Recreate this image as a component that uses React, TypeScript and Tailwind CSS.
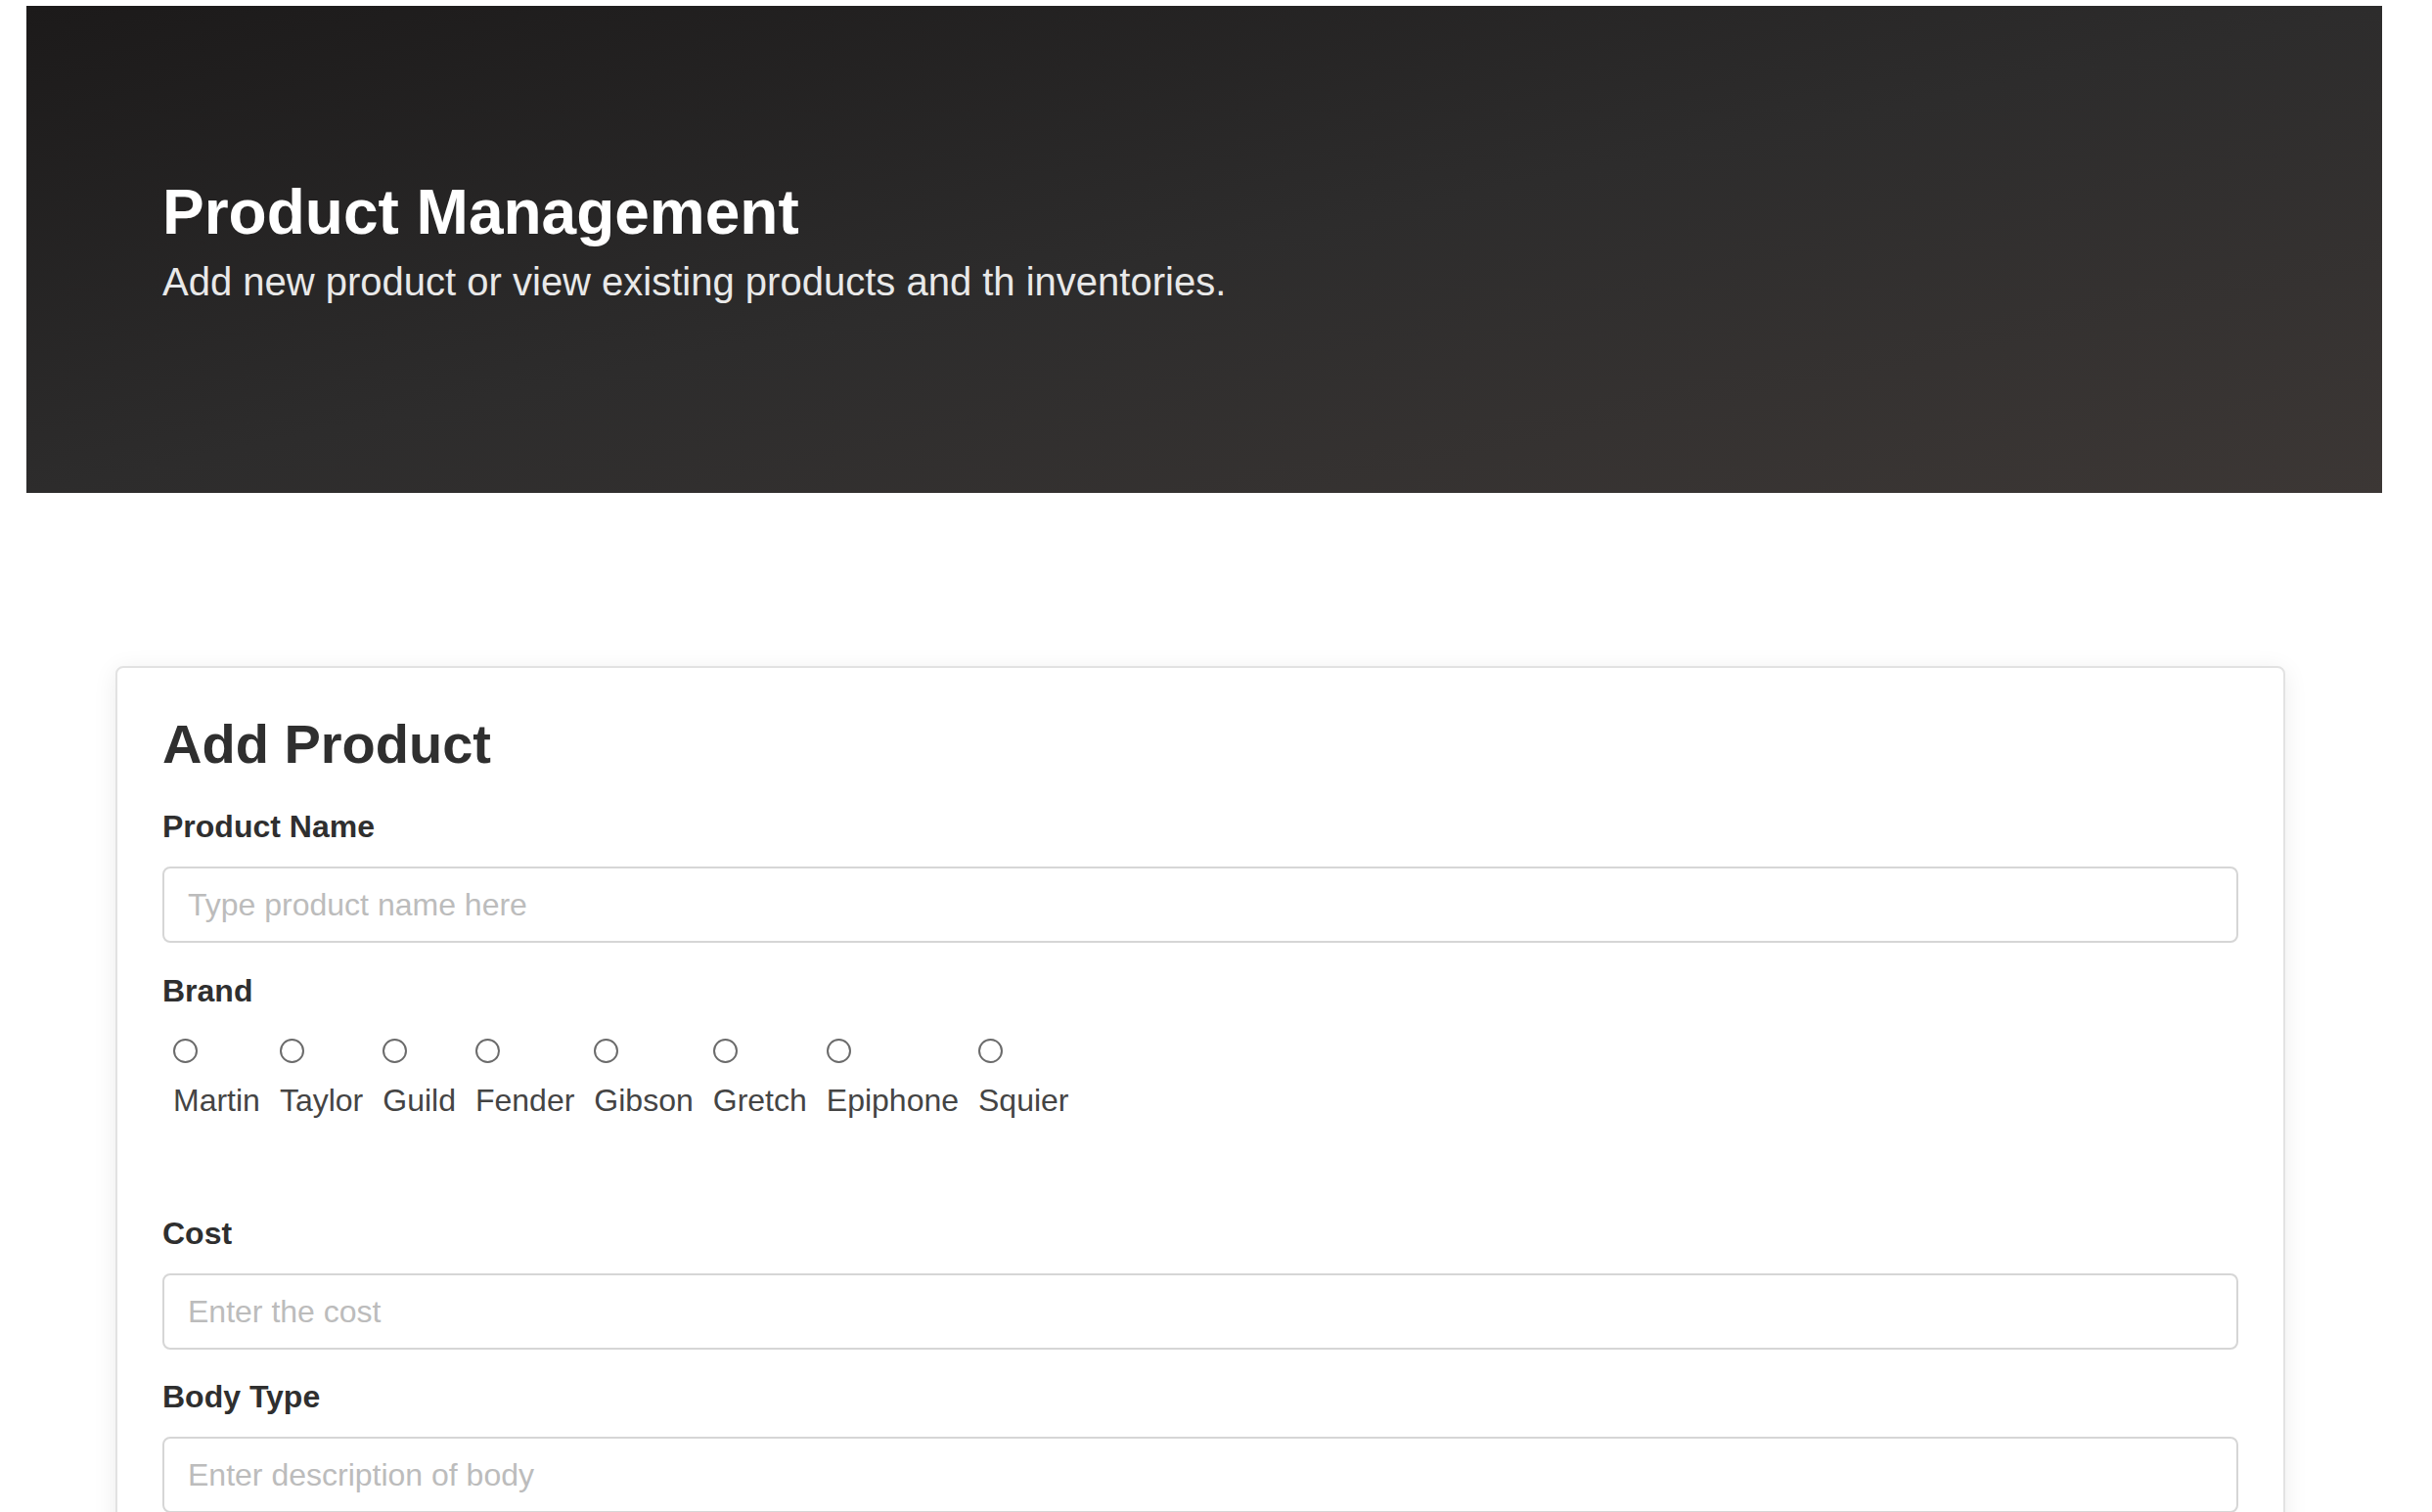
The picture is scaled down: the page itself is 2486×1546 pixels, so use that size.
import React from "react";

const brands = ["Martin", "Taylor", "Guild", "Fender", "Gibson", "Gretch", "Epiphone", "Squier"];

function Field({ label, placeholder, mt }: { label: string; placeholder: string; mt: string }) {
  return (
    <div className={mt}>
      <label className="block text-[32px] leading-[40px] font-bold text-[#2f2f2f]">{label}</label>
      <input
        type="text"
        placeholder={placeholder}
        className="mt-[21px] block w-full h-[78px] rounded-[8px] border-2 border-[#d6d6d6] bg-white pl-[24px] text-[32px] text-[#333] placeholder:text-[#bcbcbc] outline-none"
        style={{ fontFamily: '"Liberation Sans", Arial, sans-serif' }}
      />
    </div>
  );
}

export default function App() {
  return (
    <div
      className="min-h-screen bg-white pt-[6px] pl-[27px] pr-[51px] pb-[200px]"
      style={{ fontFamily: '"Liberation Sans", Arial, Helvetica, sans-serif' }}
    >
      <header className="h-[498px] bg-linear-to-br from-[#1c1a1a] via-[#2d2c2c] to-[#3c3735] pl-[139px] pt-[173px]">
        <h1 className="text-[64px] leading-[77px] font-bold text-white">Product Management</h1>
        <p className="mt-[8px] text-[40px] leading-[48px] text-[#e9e9e9]">
          Add new product or view existing products and th inventories.
        </p>
      </header>

      <div className="mt-[177px] ml-[91px] w-[2218px] rounded-[8px] border-2 border-[#e2e2e2] bg-white shadow-[0_4px_24px_rgba(0,0,0,0.08)] px-[46px] pt-[44px] pb-[80px]">
        <h2 className="text-[56px] leading-[67px] font-bold text-[#2f2f2f]">Add Product</h2>

        <Field label="Product Name" placeholder="Type product name here" mt="mt-[31px]" />

        <div className="mt-[29px]">
          <div className="text-[32px] leading-[40px] font-bold text-[#2f2f2f]">Brand</div>
          <div className="mt-[29px] ml-[11px] flex gap-[20px]">
            {brands.map((b) => (
              <label key={b} className="flex flex-col items-start cursor-pointer">
                <span className="block w-[25px] h-[25px] rounded-full border-[2px] border-[#6b6b6b] bg-white" />
                <span className="mt-[18px] text-[32px] leading-[40px] text-[#444]">{b}</span>
              </label>
            ))}
          </div>
        </div>

        <Field label="Cost" placeholder="Enter the cost" mt="mt-[96px]" />
        <Field label="Body Type" placeholder="Enter description of body" mt="mt-[28px]" />
      </div>
    </div>
  );
}
